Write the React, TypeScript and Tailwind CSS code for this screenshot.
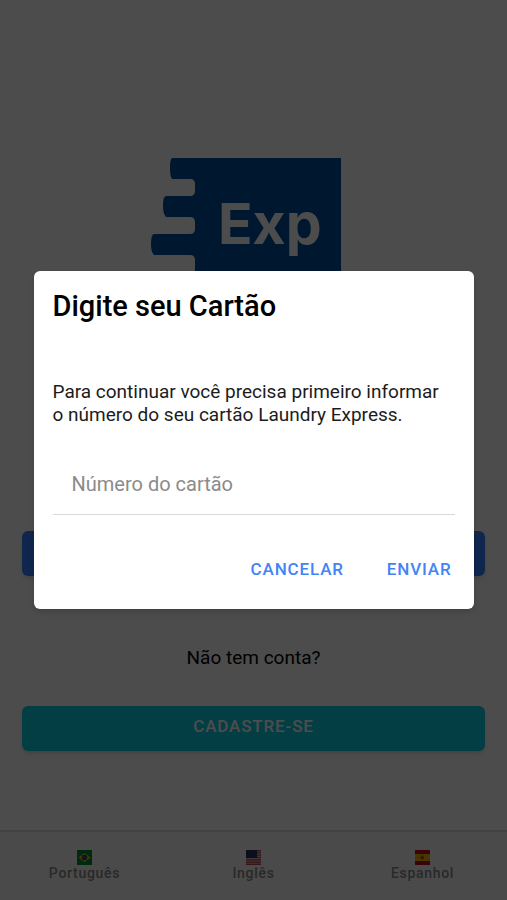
import React from "react";

function Logo() {
  return (
    <svg viewBox="0 0 192 192" className="block h-48 w-48" role="img" aria-label="Exp">
      <path
        fill="#004da0"
        d="M22 0H191V192H45V102Q45 97 40 97H4Q1 94 1 86Q1 76 4 76H40Q45 76 45 71V64Q45 59 40 59H16Q13 56 13 48Q13 38 16 38H40Q45 38 45 33V26Q45 21 40 21H22Q20 18 20 10Q20 1 22 0Z"
      />
      <text
        x="68"
        y="86"
        fill="#ffffff"
        fontFamily="Inter, sans-serif"
        fontSize="57"
        fontWeight="700"
      >
        Exp
      </text>
    </svg>
  );
}

function BrazilFlag() {
  return (
    <svg viewBox="0 0 15 15" className="block h-[15px] w-[15px]" aria-hidden="true">
      <rect width="15" height="15" fill="#008c35" />
      <path d="M7.5 3L13.5 7.5L7.5 12L1.5 7.5Z" fill="#e0c800" />
      <circle cx="7.5" cy="7.5" r="2.8" fill="#1c3a78" />
      <path d="M4.9 6.9Q8 6.4 10 8.6" stroke="#8fa0b8" strokeWidth="0.5" fill="none" />
    </svg>
  );
}

function UsaFlag() {
  return (
    <svg viewBox="0 0 15 15" className="block h-[15px] w-[15px]" aria-hidden="true">
      <rect width="15" height="15" fill="#dcb4b4" />
      <path
        d="M0 .6H15M0 2.9H15M0 5.2H15M0 7.5H15M0 9.8H15M0 12.1H15M0 14.4H15"
        stroke="#b84450"
        strokeWidth="1.15"
      />
      <rect width="11" height="8" fill="#27305f" />
    </svg>
  );
}

function SpainFlag() {
  return (
    <svg viewBox="0 0 15 15" className="block h-[15px] w-[15px]" aria-hidden="true">
      <rect width="15" height="15" fill="#c60b1e" />
      <rect y="4" width="15" height="7" fill="#f0b400" />
      <path d="M5.5 6.5H9V8.5Q7 10 5.5 8.5Z" fill="#a04a19" />
      <path d="M6 5.5H8V6.5H6Z" fill="#8a6a2c" />
    </svg>
  );
}

const languages = [
  { label: "Português", Flag: BrazilFlag },
  { label: "Inglês", Flag: UsaFlag },
  { label: "Espanhol", Flag: SpainFlag },
];

export default function App() {
  return (
    <div className="relative flex min-h-screen flex-col bg-white font-['Roboto',sans-serif] text-black">
      <main className="flex flex-1 flex-col px-[22px] pt-[158px]">
        <div className="flex justify-center pr-4">
          <Logo />
        </div>
        <button
          type="button"
          aria-label="Entrar"
          className="mt-[181px] h-[45px] w-full rounded-md bg-[#3880ff] shadow-md"
        />
        <p className="mt-[70px] text-center text-[19px] leading-[23px]">Não tem conta?</p>
        <button
          type="button"
          className="mt-[37px] h-[45px] w-full rounded-md bg-[#0cd1e8] pb-[3px] text-[17px] font-medium tracking-wider text-white shadow-md"
        >
          CADASTRE-SE
        </button>
      </main>

      <nav className="grid h-[70px] grid-cols-3 border-t-2 border-[#dedede] bg-[#f9f9f9]">
        {languages.map(({ label, Flag }) => (
          <button
            key={label}
            type="button"
            className="flex flex-col items-center pt-[18px] text-[14px] leading-4 font-medium tracking-wider text-[#898989]"
          >
            <Flag />
            {label}
          </button>
        ))}
      </nav>

      <div className="absolute inset-0 flex items-center justify-center bg-black/70 px-[33px] pb-5">
        <div
          role="dialog"
          aria-modal="true"
          aria-labelledby="dialog-title"
          className="w-full max-w-[440px] rounded-md bg-white px-[19px] pt-[18px] pb-[17px] shadow-md"
        >
          <h2 id="dialog-title" className="text-[29px] leading-[35px] font-medium">
            Digite seu Cartão
          </h2>
          <p className="mt-14 pr-3 text-[19px] leading-[23px] text-[#1c1c1c]">
            Para continuar você precisa primeiro informar o número do seu cartão Laundry Express.
          </p>
          <input
            type="text"
            aria-label="Número do cartão"
            placeholder="Número do cartão"
            className="mt-[27px] block h-[62px] w-full border-b border-[#d9d9d9] px-[19px] text-[20px] outline-none placeholder:text-[#8b8b8b]"
          />
          <div className="mt-[33px] flex justify-end gap-[37px] text-[17px] font-medium text-[#4284f5]">
            <button type="button" className="h-11 px-[3px] tracking-wider">
              CANCELAR
            </button>
            <button type="button" className="h-11 px-[3px] tracking-wider">
              ENVIAR
            </button>
          </div>
        </div>
      </div>
    </div>
  );
}
